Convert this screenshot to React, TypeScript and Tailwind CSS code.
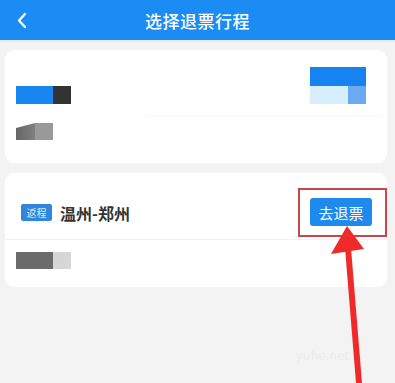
import React from "react";

export default function App() {
  return (
    <div
      className="relative w-[395px] h-[383px] overflow-hidden bg-[#f3f3f4]"
      style={{ fontFamily: '"Noto Sans CJK SC", "Noto Sans", sans-serif' }}
    >
      {/* Header */}
      <div className="relative flex h-[40px] items-center justify-center bg-[#1a8cf3]">
        <svg className="absolute left-[15px] top-[12px]" width="14" height="17" viewBox="0 0 14 17">
          <path d="M10 2 L4 8.5 L10 15" fill="none" stroke="#ffffff" strokeWidth="2.4" strokeLinecap="round" strokeLinejoin="round" />
        </svg>
        <span className="text-[17px] font-medium leading-none text-white tracking-[0.5px]">选择退票行程</span>
      </div>
      <div className="h-[2px] bg-[#e3eef9]" />

      <div className="flex flex-col gap-[10px] pl-[5px] pr-[8px] pt-[8px]">
        {/* Card 1 */}
        <div className="h-[113px] rounded-[9px] bg-white">
          <div className="flex h-[65px] items-start justify-between pl-[11px] pr-[21px]">
            <div className="mt-[36px] flex">
              <div className="h-[18px] w-[37px] bg-[#1786f0]" />
              <div className="h-[18px] w-[18px] bg-[#333333]" />
            </div>
            <div className="mt-[17px] flex w-[56px] flex-col">
              <div className="h-[19px] bg-[#1783f1]" />
              <div className="flex h-[18px]">
                <div className="w-[38px] bg-[#d7effd]" />
                <div className="w-[18px] bg-[#6aaaf0]" />
              </div>
            </div>
          </div>
          <div className="ml-[140px] mr-[4px] h-px bg-[#f6f6f6]" />
          <div className="ml-[11px] mt-[7px] flex h-[17px]">
            <div className="w-[19px] bg-gradient-to-r from-[#666666] to-[#808080] [clip-path:polygon(0_30%,100%_0,100%_100%,0_100%)]" />
            <div className="w-[18px] bg-[#999999]" />
          </div>
        </div>

        {/* Card 2 */}
        <div className="h-[114px] rounded-[9px] bg-white">
          <div className="flex h-[67px] items-start justify-between border-b border-[#f0f0f0] pl-[16px]">
            <div className="mt-[31px] flex items-center">
              <div className="flex h-[17px] w-[31px] items-center justify-center rounded-[2px] bg-[#2f86de] text-[10px] leading-none text-[#dbe9f8]">
                返程
              </div>
              <span className="ml-[8px] text-[16px] font-bold leading-none text-[#333333]">温州-郑州</span>
            </div>
            <div className="mt-[15px] flex h-[49px] w-[89px] items-start border-2 border-[#c8474c] pl-[10px] pt-[8px]">
              <div className="flex h-[28px] w-[62px] items-center justify-center rounded-[3px] bg-[#1f8aee] text-[15px] leading-none text-white">
                去退票
              </div>
            </div>
          </div>
          <div className="ml-[11px] mt-[12px] flex h-[17px]">
            <div className="w-[37px] bg-[#6b6b6b]" />
            <div className="w-[18px] bg-[#d6d6d6]" />
          </div>
        </div>
      </div>

      {/* watermark */}
      <span className="absolute left-[296px] top-[345px] text-[13px] text-[#ececec]">yuhe.net</span>

      {/* Arrow annotation */}
      <svg className="pointer-events-none absolute left-0 top-0" width="395" height="383" viewBox="0 0 395 383">
        <polygon points="347,226 331,254 364,249" fill="#ee2a2a" />
        <polygon points="345,248 351,248 362,383 356,383" fill="#ee2a2a" />
      </svg>
    </div>
  );
}
